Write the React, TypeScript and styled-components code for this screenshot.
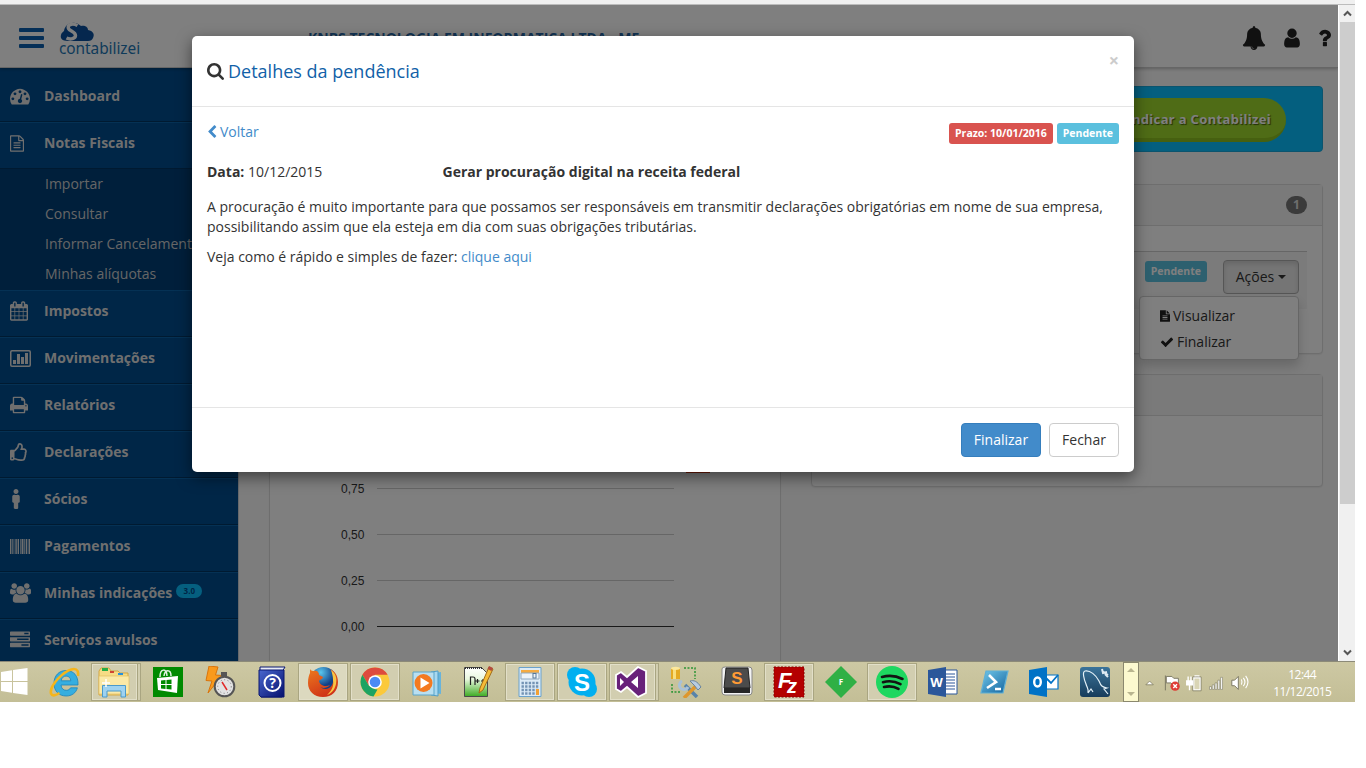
import React from "react";
import styled, { createGlobalStyle } from "styled-components";
import { FaRegThumbsUp, FaMale } from "react-icons/fa";

const GlobalStyle = createGlobalStyle`
  * { box-sizing: border-box; }
  body { margin: 0; background: #fff; overflow: hidden; }
`;

const Desktop = styled.div`
  width: 1355px;
  height: 702px;
  display: flex;
  flex-direction: column;
  font-family: "Open Sans", "Noto Sans", sans-serif;
  font-size: 14px;
  line-height: 20px;
  color: #333;
`;

const BrowserEdge = styled.div`
  height: 5px;
  flex: none;
  background: #f0f0f0;
  border-bottom: 1px solid #bcbcbc;
`;

const Browser = styled.div`
  display: flex;
  height: 656px;
  flex: none;
`;

const Viewport = styled.div`
  position: relative;
  width: 1338px;
  height: 656px;
  overflow: hidden;
  background: #fafafa;
`;

const Scrollbar = styled.div`
  width: 17px;
  border-left: 1px solid #fff;
  background: #f0f0f0;
  display: flex;
  flex-direction: column;
  align-items: center;
`;

const ScrollArrow = styled.div`
  height: 17px;
  display: flex;
  align-items: center;
`;

const ScrollThumb = styled.div`
  width: 15px;
  height: 482px;
  background: #cdcdcd;
`;

const ScrollTrack = styled.div`
  flex: 1;
`;

/* ---------- page header ---------- */

const Header = styled.header`
  position: relative;
  z-index: 1;
  height: 63px;
  display: flex;
  align-items: flex-start;
  background: #fff;
  border-bottom: 1px solid #ccc;
  box-shadow: 0 1px 3px rgba(0, 0, 0, 0.25);
`;

const MenuBars = styled.div`
  width: 25px;
  margin: 23px 0 0 19px;
  display: flex;
  flex-direction: column;
  gap: 4px;
`;

const MenuBar = styled.i`
  height: 4px;
  border-radius: 1px;
  background: #0a5fae;
`;

const Logo = styled.div`
  width: 80px;
  margin: 17px 0 0 15px;
  display: flex;
  flex-direction: column;
`;

const LogoCloud = styled.svg`
  width: 36px;
  height: 20px;
  margin-left: 1px;
`;

const LogoName = styled.span`
  font: 15.4px/15px "Noto Sans", sans-serif;
  margin-top: -1px;
  letter-spacing: -0.05px;
  color: #1e76b4;
`;

const Company = styled.div`
  display: flex;
  align-items: center;
  gap: 13px;
  margin: 23px 0 0 169px;
  font-weight: 700;
  color: #2467a8;
  white-space: nowrap;
`;

const Caret = styled.i<{ $size?: number }>`
  border: ${p => p.$size ?? 4}px solid transparent;
  border-top-color: currentColor;
  border-bottom: 0;
`;

const HeaderTools = styled.div`
  margin-left: auto;
  padding: 21px 7px 0 0;
  display: flex;
  align-items: center;
  gap: 15px;
  color: #222;
`;

/* ---------- sidebar ---------- */

const Body = styled.div`
  display: flex;
  height: 593px;
`;

const Sidebar = styled.nav`
  width: 239px;
  padding-top: 7px;
  background: #004c8e;
  border-right: 1px solid #cfd3d8;
  overflow: hidden;
  flex: none;
`;

const NavItem = styled.div<{ $first?: boolean }>`
  height: 47px;
  padding: 0 0 5px 10px;
  display: flex;
  align-items: center;
  border-top: 1px solid ${p => (p.$first ? "transparent" : "#0a62a8")};
  border-bottom: 1px solid #003462;
  font-weight: 700;
  color: #dfdfdf;
`;

const NavIcon = styled.span`
  width: 34px;
  display: flex;
  align-items: center;
`;

const SubMenu = styled.div`
  height: 121px;
  background: #003f77;
`;

const SubItem = styled.div`
  height: 30px;
  padding-left: 45px;
  line-height: 30px;
  color: #ccc;
  white-space: nowrap;
`;

const VersionBadge = styled.span`
  margin: -5px 0 0 4px;
  width: 26px;
  height: 14px;
  border-radius: 7px;
  background: #0abfff;
  color: #004c8e;
  font-size: 8px;
  line-height: 14px;
  text-align: center;
`;

/* ---------- page content ---------- */

const Main = styled.main`
  flex: 1;
  padding: 18px 15px 0 30px;
`;

const Banner = styled.div`
  height: 66px;
  display: flex;
  justify-content: flex-end;
  padding: 11px 36px 0 0;
  border-radius: 4px;
  background: #09bfff;
  border: 1px solid #17a9dd;
`;

const InviteButton = styled.div`
  height: 44px;
  width: 230px;
  padding-right: 15px;
  border-radius: 22px;
  background: #9ed82c;
  border-bottom: 4px solid #8cc020;
  color: #fff;
  text-shadow: 1px 1px 1px #45600f;
  font: 700 13px/42px "Noto Sans", sans-serif;
  letter-spacing: 0.35px;
  text-align: right;
  white-space: nowrap;
`;

const Columns = styled.div`
  margin-top: 32px;
  display: grid;
  grid-template-columns: 512px 512px;
  gap: 30px;
`;

const Column = styled.div`
  display: flex;
  flex-direction: column;
  gap: 20px;
`;

const Panel = styled.section<{ $height: number }>`
  height: ${p => p.$height}px;
  border: 1px solid #ddd;
  border-radius: 4px;
  background: #fff;
  box-shadow: 0 1px 1px rgba(0, 0, 0, 0.05);
`;

const PanelHead = styled.div`
  height: 41px;
  display: flex;
  align-items: center;
  justify-content: flex-end;
  padding: 0 15px;
  background: #f5f5f5;
  border-bottom: 1px solid #ddd;
`;

const CountBadge = styled.span`
  width: 21px;
  height: 18px;
  border-radius: 9px;
  background: #777;
  color: #ddd;
  font-size: 12px;
  font-weight: 700;
  line-height: 18px;
  text-align: center;
`;

const TaskRow = styled.div`
  position: relative;
  margin: 25px 15px 0;
  height: 58px;
  display: flex;
  justify-content: flex-end;
  align-items: flex-start;
  gap: 16px;
  padding: 8px 8px 0;
  border-top: 1px solid #ccc;
  background: #f7f7f7;
`;

const Label = styled.span<{ $tone: string }>`
  height: 21px;
  margin-top: 1px;
  padding: 0 6px;
  border-radius: 3px;
  background: ${p => p.$tone};
  color: #fff;
  font-size: 10.5px;
  font-weight: 700;
  line-height: 20px;
  white-space: nowrap;
`;

const ActionsButton = styled.div`
  width: 76px;
  height: 34px;
  display: flex;
  align-items: center;
  justify-content: center;
  gap: 4px;
  border: 1px solid #adadad;
  border-radius: 4px;
  background: #ebebeb;
  box-shadow: inset 0 3px 5px rgba(0, 0, 0, 0.125);
`;

const Dropdown = styled.div`
  position: absolute;
  top: 44px;
  right: 8px;
  width: 160px;
  height: 64px;
  padding: 6px 0 0 20px;
  border: 1px solid #ccc;
  border-radius: 4px;
  background: #fff;
  box-shadow: 0 6px 12px rgba(0, 0, 0, 0.175);
`;

const DropdownItem = styled.div`
  height: 26px;
  display: flex;
  align-items: center;
  gap: 3px;
`;

const Chart = styled.svg`
  display: block;
  width: 510px;
  height: 500px;
`;

/* ---------- modal ---------- */

const Backdrop = styled.div`
  position: absolute;
  inset: 0;
  z-index: 2;
  background: rgba(0, 0, 0, 0.5);
`;

const Modal = styled.div`
  position: absolute;
  z-index: 3;
  left: 192px;
  top: 31px;
  width: 942px;
  height: 436px;
  display: flex;
  flex-direction: column;
  border-radius: 5px;
  background: #fff;
  box-shadow: 0 5px 15px rgba(0, 0, 0, 0.5);
`;

const ModalHead = styled.div`
  height: 71px;
  display: flex;
  justify-content: space-between;
  padding: 15px;
  border-bottom: 1px solid #e5e5e5;
`;

const ModalTitle = styled.h4`
  margin: 0;
  height: 40px;
  display: flex;
  align-items: center;
  gap: 4px;
  color: #1161a8;
  font-size: 18px;
  font-weight: 400;
`;

const Close = styled.span`
  color: #ccc;
  font-size: 18px;
  font-weight: 700;
  line-height: 19px;
`;

const ModalBody = styled.div`
  flex: 1;
  padding: 15px;
`;

const ModalBar = styled.div`
  display: flex;
  justify-content: space-between;
  height: 40px;
`;

const Labels = styled.div`
  display: flex;
  align-items: flex-start;
  gap: 4px;
`;

const Link = styled.span`
  color: #428bca;
  svg { margin: 0 3px -2px 0; }
`;

const Facts = styled.div`
  display: grid;
  grid-template-columns: 235.5px 1fr;
  margin-bottom: 15px;
`;

const Paragraph = styled.p`
  margin: 0 0 10px;
`;

const ModalFoot = styled.div`
  height: 65px;
  display: flex;
  justify-content: flex-end;
  gap: 8px;
  padding: 15px;
  border-top: 1px solid #e5e5e5;
`;

const Button = styled.div<{ $primary?: boolean }>`
  height: 34px;
  width: ${p => (p.$primary ? 80 : 70)}px;
  border: 1px solid ${p => (p.$primary ? "#357ebd" : "#ccc")};
  border-radius: 4px;
  background: ${p => (p.$primary ? "#428bca" : "#fff")};
  color: ${p => (p.$primary ? "#fff" : "#333")};
  line-height: 32px;
  text-align: center;
`;

/* ---------- taskbar ---------- */

const Taskbar = styled.footer`
  height: 41px;
  flex: none;
  display: flex;
  align-items: stretch;
  border-top: 1px solid #8c8a78;
  background: linear-gradient(#cdc8a3, #c3be96);
`;

const StartSlot = styled.div`
  width: 39px;
  display: flex;
  align-items: center;
`;

const Slot = styled.div<{ $narrow?: boolean }>`
  width: ${p => (p.$narrow ? 51 : 52)}px;
  display: flex;
  justify-content: center;
  padding: 1px 0;
`;

const Tile = styled.div<{ $open?: boolean; $active?: boolean; $stack?: boolean }>`
  width: 50px;
  display: flex;
  align-items: center;
  justify-content: center;
  border: 1px solid ${p => (p.$active ? "#fbfaf0" : p.$open ? "#e3e0c8" : "transparent")};
  outline: ${p => (p.$open ? "1px solid #a9a581" : "none")};
  outline-offset: -1px;
  background: ${p => (p.$active ? "#dcd9bf" : p.$open ? "#d2ceb0" : "transparent")};
  box-shadow: ${p => (p.$open ? "inset 0 0 0 1px #e2dfc8" : "none")};
  ${p => p.$stack && "border-right: 4px double #a9a581; padding-right: 2px;"}
`;

const TrayScroll = styled.div`
  width: 17px;
  margin-left: 2px;
  border: 1px solid #8b886e;
  background: #fcf9cf;
  display: flex;
  flex-direction: column;
  align-items: center;
  justify-content: space-between;
  padding: 5px 0;
  color: #b9b58f;
`;

const CaretUp = styled.i`
  border: 4px solid transparent;
  border-bottom-color: currentColor;
  border-top: 0;
`;

const Tray = styled.div`
  width: 110px;
  display: flex;
  align-items: center;
  padding-left: 5px;
`;

const Clock = styled.div`
  width: 106px;
  padding-top: 4px;
  color: #fff;
  font: 12px/17px "Open Sans", sans-serif;
  letter-spacing: -0.55px;
  text-align: center;
`;

/* ---------- icons ---------- */

const paths = {
  search: "M1216 832q0-185-131.5-316.5t-316.5-131.5-316.5 131.5-131.5 316.5 131.5 316.5 316.5 131.5 316.5-131.5 131.5-316.5zm512 832q0 52-38 90t-90 38q-54 0-90-38l-343-342q-179 124-399 124-143 0-273.5-55.5t-225-150-150-225-55.5-273.5 55.5-273.5 150-225 225-150 273.5-55.5 273.5 55.5 225 150 150 225 55.5 273.5q0 220-124 399l343 343q37 37 37 90z",
  dashboard: "M384 1152q0-53-37.5-90.5t-90.5-37.5-90.5 37.5-37.5 90.5 37.5 90.5 90.5 37.5 90.5-37.5 37.5-90.5zm192-448q0-53-37.5-90.5t-90.5-37.5-90.5 37.5-37.5 90.5 37.5 90.5 90.5 37.5 90.5-37.5 37.5-90.5zm428 481l101-382q6-26-7.5-48.5t-38.5-29.5-48 6.5-30 39.5l-101 382q-60 5-107 43.5t-63 98.5q-20 77 20 146t117 89 146-20 89-117q16-60-6-117t-72-91zm660-33q0-53-37.5-90.5t-90.5-37.5-90.5 37.5-37.5 90.5 37.5 90.5 90.5 37.5 90.5-37.5 37.5-90.5zm-640-640q0-53-37.5-90.5t-90.5-37.5-90.5 37.5-37.5 90.5 37.5 90.5 90.5 37.5 90.5-37.5 37.5-90.5zm448 192q0-53-37.5-90.5t-90.5-37.5-90.5 37.5-37.5 90.5 37.5 90.5 90.5 37.5 90.5-37.5 37.5-90.5zm320 448q0 261-141 483-19 29-54 29h-1402q-35 0-54-29-141-221-141-483 0-182 71-348t191-286 286-191 348-71 348 71 286 191 191 286 71 348z",
  fileLines: "M1596 380q28 28 48 76t20 88v1152q0 40-28 68t-68 28h-1344q-40 0-68-28t-28-68v-1600q0-40 28-68t68-28h896q40 0 88 20t76 48zm-444-244v376h376q-10-29-22-41l-313-313q-12-12-41-22zm384 1528v-1024h-416q-40 0-68-28t-28-68v-416h-768v1536h1280zm-1024-864q0-14 9-23t23-9h704q14 0 23 9t9 23v64q0 14-9 23t-23 9h-704q-14 0-23-9t-9-23v-64zm736 224q14 0 23 9t9 23v64q0 14-9 23t-23 9h-704q-14 0-23-9t-9-23v-64q0-14 9-23t23-9h704zm0 256q14 0 23 9t9 23v64q0 14-9 23t-23 9h-704q-14 0-23-9t-9-23v-64q0-14 9-23t23-9h704z",
  calendar: "M192 1664h288v-288h-288v288zm352 0h320v-288h-320v288zm-352-352h288v-320h-288v320zm352 0h320v-320h-320v320zm-352-384h288v-288h-288v288zm736 736h320v-288h-320v288zm-384-736h320v-288h-320v288zm768 736h288v-288h-288v288zm-384-352h320v-320h-320v320zm-352-864v-288q0-13-9.5-22.5t-22.5-9.5h-64q-13 0-22.5 9.5t-9.5 22.5v288q0 13 9.5 22.5t22.5 9.5h64q13 0 22.5-9.5t9.5-22.5zm736 864h288v-320h-288v320zm-384-384h320v-288h-320v288zm384 0h288v-288h-288v288zm32-480v-288q0-13-9.5-22.5t-22.5-9.5h-64q-13 0-22.5 9.5t-9.5 22.5v288q0 13 9.5 22.5t22.5 9.5h64q13 0 22.5-9.5t9.5-22.5zm384-64v1280q0 52-38 90t-90 38h-1408q-52 0-90-38t-38-90v-1280q0-52 38-90t90-38h128v-96q0-66 47-113t113-47h64q66 0 113 47t47 113v96h384v-96q0-66 47-113t113-47h64q66 0 113 47t47 113v96h128q52 0 90 38t38 90z",
  print: "M448 1536h896v-256h-896v256zm0-640h896v-384h-160q-40 0-68-28t-28-68v-160h-640v640zm1152 64q0-26-19-45t-45-19-45 19-19 45 19 45 45 19 45-19 19-45zm128 0v416q0 13-9.5 22.5t-22.5 9.5h-224v160q0 40-28 68t-68 28h-960q-40 0-68-28t-28-68v-160h-224q-13 0-22.5-9.5t-9.5-22.5v-416q0-79 56.5-135.5t135.5-56.5h64v-544q0-40 28-68t68-28h672q40 0 88 20t76 48l152 152q28 28 48 76t20 88v256h64q79 0 135.5 56.5t56.5 135.5z",
  users: "M657 896q-162 5-265 128h-134q-82 0-138-40.5t-56-118.5q0-353 124-353 6 0 43.5 21t97.5 42.5 119 21.5q67 0 133-23-5 37-5 66 0 159 93 288zm1071 637q0 120-73 189.5t-194 69.5h-874q-121 0-194-69.5t-73-189.5q0-53 3.5-103.5t14-109 26.5-108.5 43-97.5 62-81 85.5-53.5 111.5-20q10 0 43 21.5t73 48 107 48 135 21.5 135-21.5 107-48 73-48 43-21.5q61 0 111.5 20t85.5 53.5 62 81 43 97.5 26.5 108.5 14 109 3.5 103.5zm-1024-1277q0 106-75 181t-181 75-181-75-75-181 75-181 181-75 181 75 75 181zm704 384q0 159-112.5 271.5t-271.5 112.5-271.5-112.5-112.5-271.5 112.5-271.5 271.5-112.5 271.5 112.5 112.5 271.5zm576 225q0 78-56 118.5t-138 40.5h-134q-103-123-265-128 93-129 93-288 0-29-5-66 66 23 133 23 59 0 119-21.5t97.5-42.5 43.5-21q124 0 124 353zm-128-609q0 106-75 181t-181 75-181-75-75-181 75-181 181-75 181 75 75 181z",
  tasks: "M1024 1408h640v-128h-640v128zm-384-512h1024v-128h-1024v128zm640-512h384v-128h-384v128zm512 832v256q0 26-19 45t-45 19h-1664q-26 0-45-19t-19-45v-256q0-26 19-45t45-19h1664q26 0 45 19t19 45zm0-512v256q0 26-19 45t-45 19h-1664q-26 0-45-19t-19-45v-256q0-26 19-45t45-19h1664q26 0 45 19t19 45zm0-512v256q0 26-19 45t-45 19h-1664q-26 0-45-19t-19-45v-256q0-26 19-45t45-19h1664q26 0 45 19t19 45z",
  bell: "M912 1696q0-16-16-16-59 0-101.5-42.5t-42.5-101.5q0-16-16-16t-16 16q0 73 51.5 124.5t124.5 51.5q16 0 16-16zm816-288q0 52-38 90t-90 38h-448q0 106-75 181t-181 75-181-75-75-181h-448q-52 0-90-38t-38-90q50-42 91-88t85-119.5 74.5-158.5 50-206 19.5-260q0-152 117-282.5t307-158.5q-8-19-8-39 0-40 28-68t68-28 68 28 28 68q0 20-8 39 190 28 307 158.5t117 282.5q0 139 19.5 260t50 206 74.5 158.5 85 119.5 91 88z",
  user: "M1536 1399q0 109-62.5 187t-150.5 78h-854q-88 0-150.5-78t-62.5-187q0-85 8.5-160.5t31.5-152 58.5-131 94-89 134.5-34.5q131 128 313 128t313-128q76 0 134.5 34.5t94 89 58.5 131 31.5 152 8.5 160.5zm-256-887q0 159-112.5 271.5t-271.5 112.5-271.5-112.5-112.5-271.5 112.5-271.5 271.5-112.5 271.5 112.5 112.5 271.5z",
  question: "M1088 1256v240q0 16-12 28t-28 12h-240q-16 0-28-12t-12-28v-240q0-16 12-28t28-12h240q16 0 28 12t12 28zm316-600q0 54-15.5 101t-35 76.5-55 59.5-57.5 43.5-61 35.5q-41 23-68.5 65t-27.5 67q0 17-12 32.5t-28 15.5h-240q-15 0-25.5-18.5t-10.5-37.5v-45q0-83 65-156.5t143-108.5q59-27 84-56t25-76q0-42-46.5-74t-107.5-32q-65 0-108 29-35 25-107 115-13 16-31 16-12 0-25-8l-164-125q-13-10-15.5-25t5.5-28q160-266 464-266 80 0 161 31t146 83 106 127.5 41 158.5z",
  check: "M1671 566q0 40-28 68l-724 724-136 136q-28 28-68 28t-68-28l-136-136-362-362q-28-28-28-68t28-68l136-136q28-28 68-28t68 28l294 295 656-657q28-28 68-28t68 28l136 136q28 28 28 68z",
  chevronLeft: "M1427 301l-531 531 531 531q19 19 19 45t-19 45l-166 166q-19 19-45 19t-45-19l-742-742q-19-19-19-45t19-45l742-742q19-19 45-19t45 19l166 166q19 19 19 45t-19 45z",
  fileSolid: "M1152 512v-472q22 14 36 28l408 408q14 14 28 36zm-128 32q0 40 28 68t68 28h544v1056q0 40-28 68t-68 28h-1344q-40 0-68-28t-28-68v-1600q0-40 28-68t68-28h800zm256 864v-64q0-14-9-23t-23-9h-704q-14 0-23 9t-9 23v64q0 14 9 23t23 9h704q14 0 23-9t9-23zm0-256v-64q0-14-9-23t-23-9h-704q-14 0-23 9t-9 23v64q0 14 9 23t23 9h704q14 0 23-9t9-23zm0-256v-64q0-14-9-23t-23-9h-704q-14 0-23 9t-9 23v64q0 14 9 23t23 9h704q14 0 23-9t9-23z",
};

type GlyphProps = { name: keyof typeof paths; w: number; h: number; box?: string; color?: string };
const Glyph = ({ name, w, h, box = "0 0 1792 1792", color = "currentColor" }: GlyphProps) => (
  <svg width={w} height={h} viewBox={box} fill={color}><path d={paths[name]} /></svg>
);

const BarChartIcon = () => (
  <svg width="21" height="17" viewBox="0 0 21 17" fill="currentColor">
    <rect x=".75" y=".75" width="19.5" height="15.5" rx="1.2" fill="none" stroke="currentColor" strokeWidth="1.5" />
    <path d="M3 10h3v4H3zM7 4h3v10H7zM11 7h3v7h-3zM15 3h3v11h-3z" />
  </svg>
);

const BarcodeIcon = () => (
  <svg width="20" height="15" viewBox="0 0 20 15" fill="currentColor">
    <path d="M0 0h1.4v15H0zM2.1 0h.7v15h-.7zM3.6 0h.7v15h-.7zM5.4 0h1.4v15H5.4zM7.6 0H9v15H7.600zM10 0h.7v15H10zM11.500 0h2v15h-2zM14.300 0h.7v15h-.7zM15.700 0h1.400v15h-1.400zM17.800 0h.7v15h-.7zM19 0h1v15h-1z" />
  </svg>
);

const StartIcon = () => (
  <svg width="28" height="28" viewBox="0 0 28 28" fill="#fff">
    <path d="M1 4l11-1.700V13H1zM13 2.100L27.500 0v13H13zM1 14h11v10.700L1 23zM13 14h14.500v13L13 24.900z" />
  </svg>
);

const AppSvg = ({ children }: { children: React.ReactNode }) => (
  <svg width="32" height="32" viewBox="0 0 32 32">{children}</svg>
);

const IeIcon = () => (
  <AppSvg>
    <path d="M29 19H12c.3 3.500 2.400 5.300 5.300 5.300 2 0 3.500-.9 4.300-2.500h6.800C27 27 22.800 30 17.200 30 9.900 30 5 25.200 5 17.300 5 9.700 10 4.500 17 4.500c7.700 0 12.400 5.200 12 14.500zM12.200 14.800h9.600c-.2-3-2-4.700-4.700-4.700-2.700 0-4.500 1.800-4.900 4.700z" fill="#35aee0" stroke="#1a83bb" strokeWidth=".8" />
    <path d="M29 10c.6-4-.5-7-4-7C18 3 6 13.500 2.500 22.500 1 27 2 30 5.500 29.300c2-.4 3.500-1.300 5-2.300" fill="none" stroke="#f5b51b" strokeWidth="2.600" />
  </AppSvg>
);

const ExplorerIcon = () => (
  <AppSvg>
    <path d="M1 5l2-3h8l2 3h7l2 2h8v22H1z" fill="#f6dc85" stroke="#d3a742" />
    <path d="M4 2h6v3H4z" fill="#27ad46" /><path d="M12 5h4v2h-4z" fill="#d14434" /><path d="M20 7h5v2h-5z" fill="#2791dd" />
    <path d="M1 10h30v18H1z" fill="#fbe9a6" stroke="#e2bf62" strokeWidth=".7" />
    <path d="M4.500 31V19.500h23V31h-4.500v-6H9v6z" fill="#9ed2f0" stroke="#4a9acb" />
    <path d="M8 13v8M4 17h8" stroke="#fff" strokeWidth="1.500" />
  </AppSvg>
);

const StoreIcon = () => (
  <AppSvg>
    <path d="M1 1h30v30H1z" fill="#008a00" />
    <path d="M5 12l21-2-1 17-19-3z" fill="#fff" />
    <path d="M8 11c0-9 7-9 7-1M12 10c1-7 7-7 7 0" fill="none" stroke="#dff2df" strokeWidth="1.500" />
    <path d="M9 14.500l4.500-.5v4H9zM14.500 14l5-.5V18h-5zM9 19h4.500v4L9 22.500zM14.500 19h5v4.600l-5-.5z" fill="#008a00" />
  </AppSvg>
);

const StopwatchIcon = () => (
  <AppSvg>
    <path d="M5 0l9 1-2.500 8 6.500.5L4 27l4-12-6-.5z" fill="#f99a1c" stroke="#d9740c" />
    <path d="M17 6h6v4h-6z" fill="#555" />
    <circle cx="20.500" cy="20.500" r="9.800" fill="#e2e2e2" stroke="#555" strokeWidth="2" />
    <circle cx="20.500" cy="20.500" r="6.800" fill="none" stroke="#777" strokeDasharray="1 2.500" />
    <path d="M18 16l5 8" stroke="#e02a2a" strokeWidth="1.500" />
  </AppSvg>
);

const HelpIcon = () => (
  <AppSvg>
    <defs><linearGradient id="book" x2="1" y2="1"><stop stopColor="#4a68cf" /><stop offset="1" stopColor="#05106e" /></linearGradient></defs>
    <path d="M4 1h25l-3 5v25H5l-1-2z" fill="#e8ecf6" stroke="#0a1770" />
    <path d="M3 4h25v27H5l-2-2z" fill="url(#book)" stroke="#0a1770" />
    <circle cx="16.500" cy="17" r="8" fill="none" stroke="#fff" strokeWidth="2" />
    <text x="16.500" y="22" fontSize="14" fontWeight="700" fill="#fff" textAnchor="middle">?</text>
  </AppSvg>
);

const FirefoxIcon = () => (
  <AppSvg>
    <defs>
      <linearGradient id="fox" x2=".5" y2="1"><stop stopColor="#ed7a1e" /><stop offset="1" stopColor="#cf3318" /></linearGradient>
      <radialGradient id="globe" cx=".4" cy=".2"><stop stopColor="#59c6ee" /><stop offset="1" stopColor="#123f86" /></radialGradient>
    </defs>
    <circle cx="16.500" cy="14.500" r="13.500" fill="url(#globe)" />
    <path d="M3 3c1 2 3 2 4 2 3-1 5 1 5 4l4 2c0 2-4 3-4 4 1 5 7 6 11 4-3 4-9 3-10 2 7 5 15 0 13-11 0-3-1-5-3-7 5 2 8 7 8 13 0 9-6 15-15 15S1 25 1 17C1 12 2 9 3 7z" fill="url(#fox)" />
    <path d="M24 4c5 4 6 8 5 14-1 5-4 9-9 11 5-5 7-9 6-15 0-4-1-7-2-10z" fill="#f9c445" />
  </AppSvg>
);

const ChromeIcon = () => (
  <AppSvg>
    <circle cx="16" cy="16" r="14.500" fill="#fbc93b" />
    <path d="M3.400 8.800A14.500 14.500 0 0 1 28.600 8.800H16L9.800 19.500z" fill="#dd4b3e" />
    <path d="M3.400 8.800L9.800 19.600 16 23.200l2.500.4-4 6.800A14.500 14.500 0 0 1 3.400 8.800z" fill="#1da362" />
    <circle cx="16" cy="16" r="6.800" fill="#fff" /><circle cx="16" cy="16" r="5.300" fill="#4a8af4" />
  </AppSvg>
);

const MediaIcon = () => (
  <AppSvg>
    <path d="M24 7l6-1v22l-6-1z" fill="#68b4dc" /><path d="M20 6l7-1v25l-7-1z" fill="#a8d8ef" stroke="#4f9dc6" />
    <path d="M2 6h21v23H2z" fill="#b9dff0" stroke="#5ba4c9" />
    <circle cx="12.500" cy="17" r="9" fill="#f47a20" /><path d="M9.500 11.500l9 5.500-9 5.500z" fill="#fff" />
  </AppSvg>
);

const NotepadIcon = () => (
  <AppSvg>
    <defs><linearGradient id="npp" x2="0" y2="1"><stop stopColor="#fff" /><stop offset=".4" stopColor="#e9f8df" /><stop offset="1" stopColor="#3dab22" /></linearGradient></defs>
    <path d="M1.500 1.500h17l6 6v23h-23z" fill="url(#npp)" stroke="#4a4a4a" />
    <path d="M2 2h17" stroke="#333" strokeWidth="2" strokeDasharray="1 1" />
    <path d="M7.500 19v-8h2.500q2 0 2 2v6M12.500 15h4M14.500 13v4M18 15h4M20 13v4" fill="none" stroke="#222" strokeWidth="1.200" />
    <path d="M26 1l4 2-10 21-4 3 1-5z" fill="#f5bb37" stroke="#a26b16" /><path d="M26 0l4 2-1.500 3-4-2z" fill="#b34b3e" />
  </AppSvg>
);

const CalculatorIcon = () => (
  <AppSvg>
    <path d="M5 1.500h22v29H5z" fill="#dcebf7" stroke="#6ba2cc" />
    <path d="M7 4h18v3H7z" fill="#f6ab41" /><path d="M7 7h18v6H7z" fill="#eef4f9" stroke="#91aac0" />
    <rect x="19" y="7.500" width="3" height="4.500" fill="none" stroke="#56789a" />
    {[17, 20.500, 24, 27.500].map(y => <path key={y} d={`M7.500 ${y}h17`} stroke="#7393b4" strokeWidth="2.400" strokeDasharray="2.400 1.200" />)}
    <path d="M22 23h3v6h-3z" fill="#f2a134" />
  </AppSvg>
);

const SkypeIcon = () => (
  <AppSvg>
    <circle cx="9" cy="9" r="8" fill="#00aff0" /><circle cx="23" cy="23" r="8" fill="#00aff0" /><circle cx="16" cy="16" r="13.500" fill="#00aff0" />
    <text x="16" y="24.500" fontSize="24" fontWeight="700" fill="#fff" textAnchor="middle" fontFamily="Liberation Sans">S</text>
  </AppSvg>
);

const VisualStudioIcon = () => (
  <AppSvg>
    <path d="M23 1l8 4v22l-8 4-11-10-6 5-5-3V9l5-3 6 5z" fill="#68217a" stroke="#fff" strokeWidth="1.800" />
    <path d="M23 10v12l-7-6zM5 12v8l4-4z" fill="#fff" />
  </AppSvg>
);

const DatabaseToolsIcon = () => (
  <AppSvg>
    <path d="M1 2h9v11H1z" fill="#e4aa22" /><path d="M3 2h3v11H3z" fill="#f9df7d" /><ellipse cx="5.500" cy="2.300" rx="4.500" ry="1.600" fill="#fbe89d" />
    <path d="M14 2h11v11M2 18v8h9" fill="none" stroke="#2b9434" strokeWidth="1.500" strokeDasharray="2 1.500" />
    <path d="M15 19l12 12" stroke="#5883a9" strokeWidth="3.500" /><path d="M12 15a4.500 4.500 0 1 0 6 6" fill="none" stroke="#a9c1d7" strokeWidth="3" />
    <path d="M26 20L14 32" stroke="#de972d" strokeWidth="3.500" /><path d="M20 15c4-1 7 0 11 6l-3 3-4-5z" fill="#b8cce1" stroke="#69849e" />
  </AppSvg>
);

const SublimeIcon = () => (
  <AppSvg>
    <path d="M1 3q0-2 3-2h24q3 0 3 3v22q0 3-3 3H4q-3 0-3-3z" fill="#f2f2f2" stroke="#888" />
    <path d="M5 2h22l2 20H3z" fill="#4b4b4b" stroke="#222" /><path d="M3 22h26v5H3z" fill="#262626" />
    <text x="16" y="18" fontSize="17" fontWeight="700" fill="#ff9b35" textAnchor="middle" fontFamily="Liberation Sans">S</text>
  </AppSvg>
);

const FileZillaIcon = () => (
  <AppSvg>
    <path d="M1 1h30v30H1z" fill="#b40000" stroke="#8b0000" strokeDasharray="2 1.500" />
    <text x="5" y="22" fontSize="22" fontWeight="700" fontStyle="italic" fill="#fff" fontFamily="Liberation Sans">F</text>
    <text x="14" y="27" fontSize="20" fontWeight="700" fontStyle="italic" fill="#fff" fontFamily="Liberation Sans">z</text>
  </AppSvg>
);

const DiamondIcon = () => (
  <AppSvg>
    <path d="M16 0l16 16-16 16L0 16z" fill="#2fb045" />
    <text x="16" y="19" fontSize="8" fontWeight="700" fill="#fff" textAnchor="middle">F</text>
  </AppSvg>
);

const SpotifyIcon = () => (
  <AppSvg>
    <circle cx="16" cy="16" r="16" fill="#1ed760" />
    <path d="M6 11c7-2 14-1.300 20.500 2M7 16.200c6-1.700 12-1 17.500 2M8 21c5-1.200 10-.7 14.500 1.800" fill="none" stroke="#131313" strokeWidth="2.600" strokeLinecap="round" />
  </AppSvg>
);

const WordIcon = () => (
  <AppSvg>
    <path d="M17 4h13v24H17z" fill="#fff" stroke="#2b579a" />
    <path d="M19 8h9M19 11h9M19 14h9M19 17h9M19 20h9M19 23h9" stroke="#2b579a" strokeWidth="1.200" />
    <path d="M1 4l18-3v30L1 28z" fill="#2b579a" />
    <text x="9.500" y="20.500" fontSize="13" fontWeight="700" fill="#fff" textAnchor="middle">W</text>
  </AppSvg>
);

const PowerShellIcon = () => (
  <AppSvg>
    <defs><linearGradient id="ps" x2="1" y2="1"><stop stopColor="#72c8ea" /><stop offset="1" stopColor="#12639e" /></linearGradient></defs>
    <path d="M8 5h22l-5 22H3z" fill="url(#ps)" stroke="#5fb0d6" strokeWidth="1.200" />
    <path d="M11 9l7 7-9 6M17 23h6" fill="none" stroke="#fff" strokeWidth="2.600" />
  </AppSvg>
);

const OutlookIcon = () => (
  <AppSvg>
    <path d="M18 9h12v14H18z" fill="#fff" stroke="#0072c6" strokeWidth="1.200" /><path d="M18 12l5 5 7-8" fill="none" stroke="#0072c6" strokeWidth="1.800" />
    <path d="M1 4l18-3v30L1 28z" fill="#0072c6" /><ellipse cx="9.500" cy="16" rx="3.300" ry="4.500" fill="none" stroke="#fff" strokeWidth="2.400" />
  </AppSvg>
);

const MySqlIcon = () => (
  <AppSvg>
    <defs><linearGradient id="sql" x2="0" y2="1"><stop stopColor="#3b749a" /><stop offset="1" stopColor="#173c5b" /></linearGradient></defs>
    <rect x="1" y="1" width="30" height="30" rx="3" fill="url(#sql)" />
    <path d="M9 27c1-4-1-5-2-9C5 13 3 6 6 5c5-1 11 4 14 10 2 5 3 6 8 7l-3 1 4 5M9 27l3-4 2 3" fill="none" stroke="#e4f1f8" strokeWidth="1.200" />
    <path d="M23 5l6 4M23 3l1 4 4-1M26 8l3 3" fill="none" stroke="#dfeaf2" strokeWidth="2" />
  </AppSvg>
);

const TrayIcons = () => (
  <svg width="104" height="24" viewBox="1150 670 104 24">
    <path d="M1152 685l4-4 4 4z" fill="#fff" stroke="#777458" strokeWidth=".8" />
    <path d="M1173 675v16M1174 676h6l2 2h5v7h-6l-2-2h-5z" fill="#fff" stroke="#77745f" />
    <circle cx="1183.500" cy="686.500" r="5" fill="#df3c35" /><path d="M1181.500 684.500l4 4M1185.500 684.500l-4 4" stroke="#fff" strokeWidth="1.500" />
    <path d="M1203.500 677.500h7v13h-7zM1205 675.500h4v2h-4z" fill="#d9d5b5" stroke="#fff" strokeWidth="1.500" /><path d="M1202.500 676.500h9v15h-9z" fill="none" stroke="#77745f" strokeWidth=".7" />
    <path d="M1197.500 676v4M1200.500 676v4M1196 681h6v4h-6zM1199 685v6" stroke="#fff" strokeWidth="1.500" fill="#fff" />
    <path d="M1220.500 687h2v3h-2zM1223.500 685h2v5h-2zM1226.500 683h2v7h-2zM1229.500 680h2v10h-2zM1232.500 677h2v13h-2z" fill="#fff" stroke="#77745f" strokeWidth=".6" />
    <path d="M1244.500 680h3l4-4v14l-4-4h-3z" fill="#fff" stroke="#77745f" />
  </svg>
);

const SoundWaves = () => (
  <svg width="9" height="16" viewBox="0 0 9 16"><path d="M0 5q2 3 0 6M2.500 3.500q3.500 4.500 0 9M5 1.500q5 6.500 0 13" fill="none" stroke="#fff" strokeWidth="1.200" /></svg>
);

const navItems = [
  { text: "Impostos", icon: <Glyph name="calendar" w={18} h={20} box="64 0 1664 1792" /> },
  { text: "Movimentações", icon: <BarChartIcon /> },
  { text: "Relatórios", icon: <Glyph name="print" w={18} h={18} box="64 64 1664 1664" /> },
  { text: "Declarações", icon: <FaRegThumbsUp size={18} /> },
  { text: "Sócios", icon: <FaMale size={20} style={{ marginLeft: -4 }} /> },
  { text: "Pagamentos", icon: <BarcodeIcon /> },
  { text: "Minhas indicações", icon: <Glyph name="users" w={21} h={20} box="64 0 1920 1792" />, badge: "3.0" },
  { text: "Serviços avulsos", icon: <Glyph name="tasks" w={20} h={20} /> },
];

type App = { icon: React.ReactNode; open?: boolean; active?: boolean; stack?: boolean };
const apps: App[] = [
  { icon: <IeIcon /> },
  { icon: <ExplorerIcon />, open: true, stack: true },
  { icon: <StoreIcon /> },
  { icon: <StopwatchIcon /> },
  { icon: <HelpIcon /> },
  { icon: <FirefoxIcon />, open: true, active: true },
  { icon: <ChromeIcon />, open: true },
  { icon: <MediaIcon /> },
  { icon: <NotepadIcon /> },
  { icon: <CalculatorIcon />, open: true },
  { icon: <SkypeIcon />, open: true },
  { icon: <VisualStudioIcon />, open: true, stack: true },
  { icon: <DatabaseToolsIcon /> },
  { icon: <SublimeIcon /> },
  { icon: <FileZillaIcon />, open: true },
  { icon: <DiamondIcon /> },
  { icon: <SpotifyIcon />, open: true },
  { icon: <WordIcon /> },
  { icon: <PowerShellIcon /> },
  { icon: <OutlookIcon /> },
  { icon: <MySqlIcon /> },
];

const ticks = [
  { label: "0,75", y: 303.5 },
  { label: "0,50", y: 349.5 },
  { label: "0,25", y: 395.5 },
  { label: "0,00", y: 441.5 },
];

export default function App() {
  return (
    <Desktop>
      <GlobalStyle />
      <BrowserEdge />
      <Browser>
        <Viewport>
          <Header>
            <MenuBars><MenuBar /><MenuBar /><MenuBar /></MenuBars>
            <Logo>
              <LogoCloud viewBox="0 0 36 20">
                <path d="M8 19C2 19 0 16 1 13c0-2 2-3 3-4C5 3 10 0 15 1c3 0 4 2 6 3 5-1 7 2 7 4 5 1 7 4 5 8-1 2-2 3-5 3z" fill="#0b4f9c" />
                <path d="M17.500 3.500C12 .5 7 3 8.500 6.500c1 2.500 7 3 7 7 0 3-5 4.500-9 2.500" fill="none" stroke="#fff" strokeWidth="3.400" />
              </LogoCloud>
              <LogoName>contabilizei</LogoName>
            </Logo>
            <Company>KNBS TECNOLOGIA EM INFORMATICA LTDA - ME <Caret /></Company>
            <HeaderTools>
              <Glyph name="bell" w={24} h={24} />
              <Glyph name="user" w={22} h={22} />
              <Glyph name="question" w={13} h={20} box="386 128 1020 1536" />
            </HeaderTools>
          </Header>
          <Body>
            <Sidebar>
              <NavItem $first><NavIcon><Glyph name="dashboard" w={20} h={20} /></NavIcon>Dashboard</NavItem>
              <NavItem><NavIcon><Glyph name="fileLines" w={14} h={17} box="128 0 1536 1792" /></NavIcon>Notas Fiscais</NavItem>
              <SubMenu>
                <SubItem>Importar</SubItem>
                <SubItem>Consultar</SubItem>
                <SubItem>Informar Cancelamento</SubItem>
                <SubItem>Minhas alíquotas</SubItem>
              </SubMenu>
              {navItems.map(item => (
                <NavItem key={item.text}>
                  <NavIcon>{item.icon}</NavIcon>
                  {item.text}
                  {item.badge && <VersionBadge>{item.badge}</VersionBadge>}
                </NavItem>
              ))}
            </Sidebar>
            <Main>
              <Banner><InviteButton>Indicar a Contabilizei</InviteButton></Banner>
              <Columns>
                <Column>
                  <Panel $height={520}>
                    <Chart>
                      {ticks.map((tick, i) => (
                        <g key={tick.label}>
                          <text x="71" y={tick.y + 4.5} fontSize="12" fill="#333" fontFamily="Liberation Sans">{tick.label}</text>
                          <path d={`M107 ${tick.y}h297`} stroke={i === 3 ? "#333" : "#ccc"} />
                        </g>
                      ))}
                      <rect x="416" y="276" width="24" height="12" fill="#dc3912" />
                    </Chart>
                  </Panel>
                </Column>
                <Column>
                  <Panel $height={170}>
                    <PanelHead><CountBadge>1</CountBadge></PanelHead>
                    <TaskRow>
                      <Label $tone="#5bc0de">Pendente</Label>
                      <ActionsButton>Ações <Caret /></ActionsButton>
                      <Dropdown>
                        <DropdownItem><Glyph name="fileSolid" w={10} h={12} box="128 0 1536 1792" color="#222" />Visualizar</DropdownItem>
                        <DropdownItem><Glyph name="check" w={14} h={14} color="#222" />Finalizar</DropdownItem>
                      </Dropdown>
                    </TaskRow>
                  </Panel>
                  <Panel $height={113}><PanelHead /></Panel>
                </Column>
              </Columns>
            </Main>
          </Body>
          <Backdrop />
          <Modal>
            <ModalHead>
              <ModalTitle>
                <Glyph name="search" w={17} h={17} box="64 128 1664 1664" color="#333" />
                Detalhes da pendência
              </ModalTitle>
              <Close>×</Close>
            </ModalHead>
            <ModalBody>
              <ModalBar>
                <Link><Glyph name="chevronLeft" w={10} h={14} box="346 0 1100 1792" />Voltar</Link>
                <Labels>
                  <Label $tone="#d9534f">Prazo: 10/01/2016</Label>
                  <Label $tone="#5bc0de">Pendente</Label>
                </Labels>
              </ModalBar>
              <Facts>
                <span><b>Data:</b> 10/12/2015</span>
                <b>Gerar procuração digital na receita federal</b>
              </Facts>
              <Paragraph>
                A procuração é muito importante para que possamos ser responsáveis em transmitir declarações obrigatórias em nome de sua empresa, possibilitando assim que ela esteja em dia com suas obrigações tributárias.
              </Paragraph>
              <Paragraph>Veja como é rápido e simples de fazer: <Link>clique aqui</Link></Paragraph>
            </ModalBody>
            <ModalFoot>
              <Button $primary>Finalizar</Button>
              <Button>Fechar</Button>
            </ModalFoot>
          </Modal>
        </Viewport>
        <Scrollbar>
          <ScrollArrow><svg width="9" height="7" viewBox="0 0 9 7"><path d="M1 5.500l3.500-3.500L8 5.500" fill="none" stroke="#555" strokeWidth="2" /></svg></ScrollArrow>
          <ScrollThumb />
          <ScrollTrack />
          <ScrollArrow><svg width="9" height="7" viewBox="0 0 9 7"><path d="M1 1.500L4.500 5 8 1.500" fill="none" stroke="#555" strokeWidth="2" /></svg></ScrollArrow>
        </Scrollbar>
      </Browser>
      <Taskbar>
        <StartSlot><StartIcon /></StartSlot>
        {apps.map((app, i) => (
          <Slot key={i} $narrow={i > 15}>
            <Tile $open={app.open} $active={app.active} $stack={app.stack}>{app.icon}</Tile>
          </Slot>
        ))}
        <TrayScroll><CaretUp /><Caret /></TrayScroll>
        <Tray><TrayIcons /><SoundWaves /></Tray>
        <Clock>12:44<br />11/12/2015</Clock>
      </Taskbar>
    </Desktop>
  );
}
